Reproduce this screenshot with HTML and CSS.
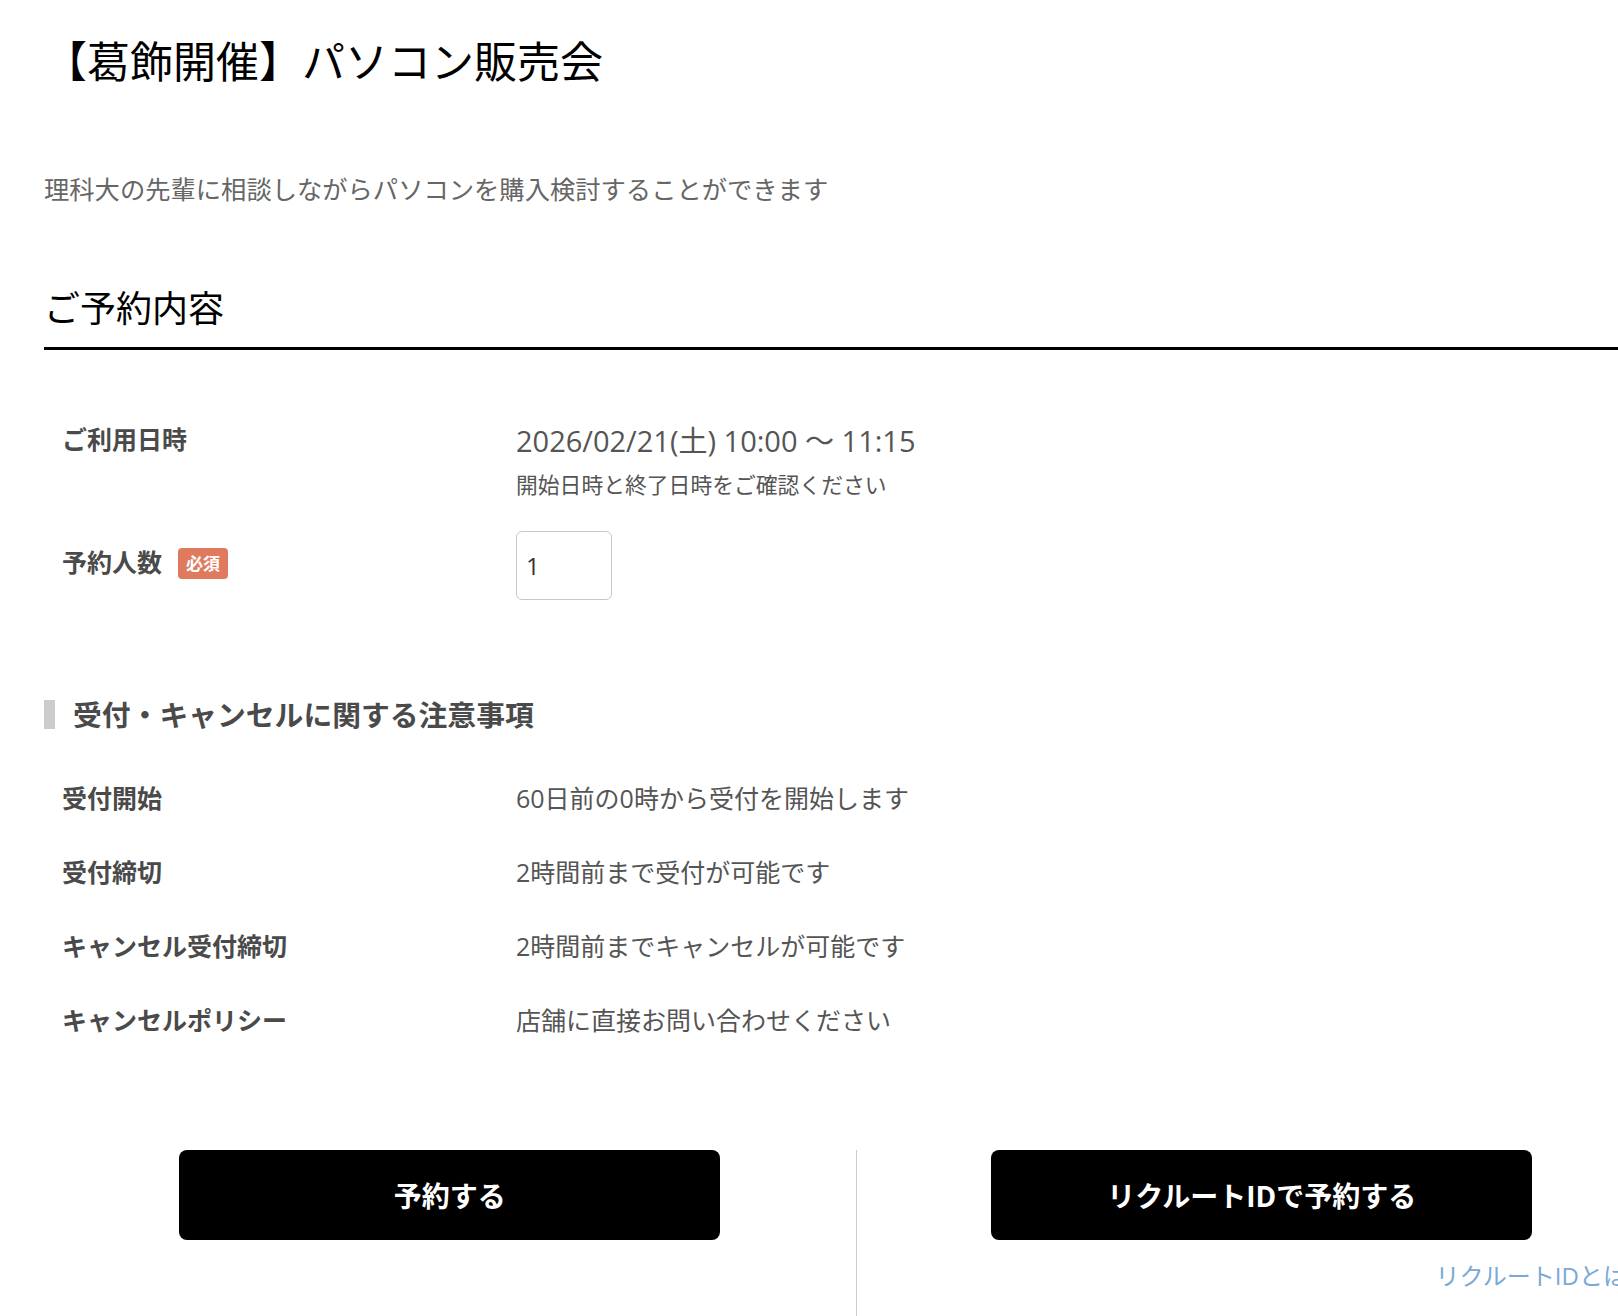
FILE: index.html
```html
<!DOCTYPE html>
<html lang="ja">
<head>
    <meta charset="UTF-8">
    <meta name="viewport" content="width=device-width, initial-scale=1.0">
    <title>【葛飾開催】パソコン販売会</title>
    <link rel="stylesheet" href="styles.css">
</head>
<body>

<div class="page">
    <h1 class="event-title">【葛飾開催】パソコン販売会</h1>
    <p class="event-desc">理科大の先輩に相談しながらパソコンを購入検討することができます</p>

    <h2 class="section-title">ご予約内容</h2>

    <div class="form-rows">
        <div class="form-row">
            <div class="row-label">ご利用日時</div>
            <div class="row-value">
                <div class="datetime">2026/02/21(土) 10:00 ～ 11:15</div>
                <div class="note">開始日時と終了日時をご確認ください</div>
            </div>
        </div>
        <div class="form-row form-row-center">
            <div class="row-label">予約人数<span class="badge">必須</span></div>
            <div class="row-value">
                <input type="number" class="count-input" value="1" min="1">
            </div>
        </div>
    </div>

    <h3 class="sub-title">受付・キャンセルに関する注意事項</h3>

    <div class="notes">
        <div class="form-row notes-row">
            <div class="row-label">受付開始</div>
            <div class="row-value">60日前の0時から受付を開始します</div>
        </div>
        <div class="form-row notes-row">
            <div class="row-label">受付締切</div>
            <div class="row-value">2時間前まで受付が可能です</div>
        </div>
        <div class="form-row notes-row">
            <div class="row-label">キャンセル受付締切</div>
            <div class="row-value">2時間前までキャンセルが可能です</div>
        </div>
        <div class="form-row notes-row">
            <div class="row-label">キャンセルポリシー</div>
            <div class="row-value">店舗に直接お問い合わせください</div>
        </div>
    </div>

    <div class="actions">
        <div class="action-col">
            <button class="btn-reserve">予約する</button>
        </div>
        <div class="action-col action-col-right">
            <button class="btn-reserve">リクルートIDで予約する</button>
            <a href="#" class="help-link">リクルートIDとは？</a>
        </div>
    </div>
</div>

</body>
</html>
```

FILE: styles.css
```css
/* Base */
* {
    box-sizing: border-box;
    margin: 0;
    padding: 0;
}

html, body {
    overflow-x: hidden;
}

body {
    font-family: "Open Sans", "Noto Sans CJK JP", sans-serif;
    background-color: #ffffff;
    color: #555555;
}

.page {
    width: 1667px;
    padding-left: 44px;
}

/* Event header */
.event-title {
    font-size: 43px;
    font-weight: normal;
    line-height: 60px;
    color: #000000;
    padding-top: 32px;
}

.event-desc {
    font-size: 25.3px;
    line-height: 36px;
    color: #666666;
    margin-top: 79px;
}

.section-title {
    font-size: 36px;
    font-weight: normal;
    line-height: 50px;
    color: #000000;
    margin-top: 77px;
    padding-bottom: 13px;
    border-bottom: 3px solid #000000;
}

/* Form rows */
.form-rows {
    margin-top: 72px;
}

.form-row {
    display: grid;
    grid-template-columns: 454px 1fr;
    padding-left: 18px;
    align-items: start;
}

.form-row + .form-row {
    margin-top: 31px;
}

.form-row-center {
    align-items: center;
}

.form-row-center .row-label {
    padding-bottom: 7px;
}

.row-label {
    font-size: 25px;
    font-weight: bold;
    line-height: 34px;
    color: #4a4a4a;
}

.row-value {
    font-size: 25px;
    line-height: 34px;
    color: #555555;
}

.datetime {
    font-size: 29px;
    line-height: 38px;
}

.note {
    font-size: 21.8px;
    line-height: 30px;
    margin-top: 10px;
}

.badge {
    display: inline-block;
    vertical-align: middle;
    margin-left: 16px;
    margin-top: -4px;
    width: 50px;
    height: 31px;
    line-height: 31px;
    text-align: center;
    font-size: 17px;
    font-weight: bold;
    color: #ffffff;
    background-color: #e07a5f;
    border-radius: 4px;
}

.count-input {
    width: 96px;
    height: 69px;
    padding-left: 9px;
    font-family: "Open Sans", sans-serif;
    font-size: 24px;
    color: #333333;
    border: 1px solid #c8c8c8;
    border-radius: 6px;
    -moz-appearance: textfield;
}

.count-input::-webkit-inner-spin-button,
.count-input::-webkit-outer-spin-button {
    -webkit-appearance: none;
    margin: 0;
}

/* Notes */
.sub-title {
    font-size: 28.8px;
    font-weight: bold;
    line-height: 29px;
    color: #4a4a4a;
    margin-top: 100px;
    padding-left: 18px;
    border-left: 11px solid #cccccc;
}

.notes {
    margin-top: 52px;
}

.notes-row + .notes-row {
    margin-top: 40px;
}

/* Buttons */
.actions {
    display: grid;
    grid-template-columns: 1fr 1fr;
    margin-top: 113px;
}

.action-col {
    display: flex;
    flex-direction: column;
    align-items: center;
    padding-bottom: 80px;
}

.action-col-right {
    border-left: 1px solid #cccccc;
}

.btn-reserve {
    width: 541px;
    height: 90px;
    background-color: #000000;
    color: #ffffff;
    font-family: "Open Sans", "Noto Sans CJK JP", sans-serif;
    font-size: 28px;
    font-weight: bold;
    border: none;
    border-radius: 8px;
    cursor: pointer;
}

.help-link {
    align-self: flex-end;
    margin-top: 19px;
    padding-right: 16px;
    font-size: 24px;
    line-height: 34px;
    color: #78a9d9;
    text-decoration: none;
}
```
